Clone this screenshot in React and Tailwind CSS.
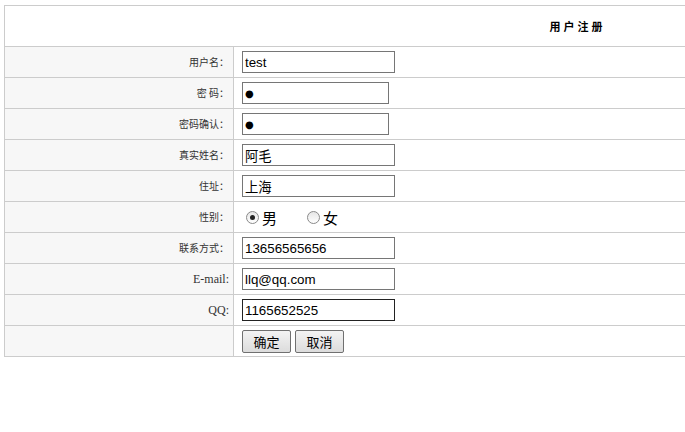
import React from "react";

const cjk = { fontFamily: '"Noto Sans CJK SC", "Noto Sans", sans-serif' };
const serif = { fontFamily: '"Liberation Serif", "Noto Sans CJK SC", serif' };
const arial = { fontFamily: '"Liberation Sans", "Noto Sans CJK SC", sans-serif' };
const dot = { fontFamily: '"DejaVu Sans", sans-serif' };

function Row({ label, latin, children }) {
  return (
    <div className="flex h-[31px] border-b border-[#cccccc]">
      <div className="flex w-[229px] shrink-0 items-center justify-end border-r border-[#cccccc] bg-[#f7f7f7] pr-[4px] text-[#333]">
        {latin ? (
          <span style={serif} className="text-[12px]">{label}</span>
        ) : (
          <span style={cjk} className="text-[10px] leading-none">{label}</span>
        )}
      </div>
      <div className="flex flex-1 items-center pl-[8px]">{children}</div>
    </div>
  );
}

function TextBox({ value, w = "w-[153px]", border = "border-[#767676]" }) {
  return (
    <input
      readOnly
      type="text"
      value={value}
      style={arial}
      className={`${w} h-[22px] border ${border} bg-white px-[2px] text-[13.33px] text-black outline-none`}
    />
  );
}

function PassBox() {
  return (
    <input
      readOnly
      type="text"
      value="●"
      style={dot}
      className="h-[22px] w-[147px] border border-[#767676] bg-white px-[2px] text-[10px] text-black outline-none"
    />
  );
}

function Radio({ checked, label }) {
  return (
    <span className="flex items-center">
      <span className="flex h-[13px] w-[13px] items-center justify-center rounded-full border border-[#8a8a8a] bg-gradient-to-b from-[#e6e6e6] to-white">
        {checked && <span className="h-[5px] w-[5px] rounded-full bg-[#222]" />}
      </span>
      <span style={cjk} className="ml-[3px] text-[15px] leading-none text-black">{label}</span>
    </span>
  );
}

function Btn({ children }) {
  return (
    <button
      style={cjk}
      className="flex h-[23px] w-[49px] items-center justify-center rounded-[2px] border border-[#707070] bg-gradient-to-b from-[#f3f3f3] to-[#dcdcdc] text-[13px] leading-none text-black"
    >
      {children}
    </button>
  );
}

export default function App() {
  return (
    <div className="h-[432px] w-full overflow-hidden bg-white">
      <div className="ml-[4px] mt-[5px] w-[1146px] border-l border-t border-[#cccccc]">
        <div className="flex h-[41px] items-center justify-center border-b border-[#cccccc]">
          <span style={cjk} className="text-[11px] font-bold tracking-[3px] text-black">用户注册</span>
        </div>
        <Row label="用户名：">
          <TextBox value="test" />
        </Row>
        <Row label="密 码：">
          <PassBox />
        </Row>
        <Row label="密码确认：">
          <PassBox />
        </Row>
        <Row label="真实姓名：">
          <TextBox value="阿毛" />
        </Row>
        <Row label="住址：">
          <TextBox value="上海" />
        </Row>
        <Row label="性别：">
          <div className="flex items-center gap-[30px] pl-[4px]">
            <Radio checked label="男" />
            <Radio label="女" />
          </div>
        </Row>
        <Row label="联系方式：">
          <TextBox value="13656565656" />
        </Row>
        <Row label="E-mail:" latin>
          <TextBox value="llq@qq.com" />
        </Row>
        <Row label="QQ:" latin>
          <TextBox value="1165652525" border="border-[#222]" />
        </Row>
        <Row label="">
          <div className="flex gap-[4px]">
            <Btn>确定</Btn>
            <Btn>取消</Btn>
          </div>
        </Row>
      </div>
    </div>
  );
}
